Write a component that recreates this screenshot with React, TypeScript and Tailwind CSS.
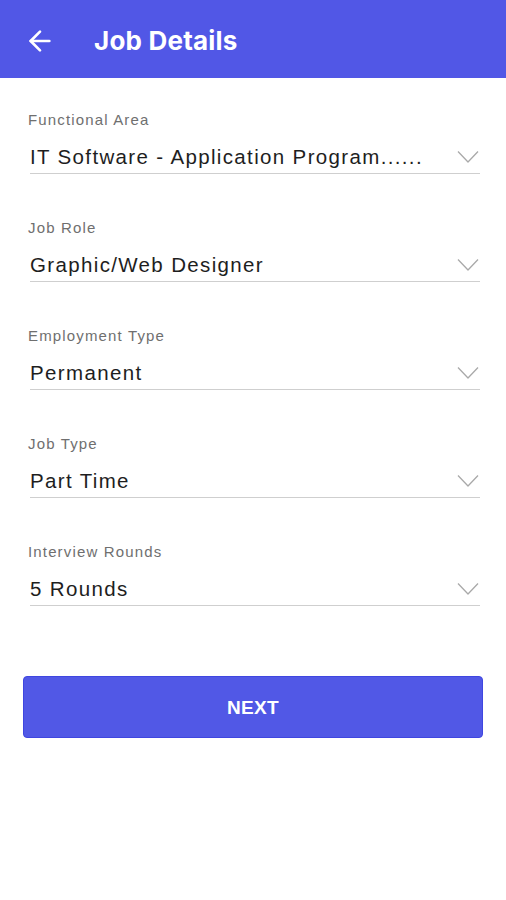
import { ArrowLeft } from "lucide-react";

const fields = [
  { label: "Functional Area", value: "IT Software - Application Program......" },
  { label: "Job Role", value: "Graphic/Web Designer" },
  { label: "Employment Type", value: "Permanent" },
  { label: "Job Type", value: "Part Time" },
  { label: "Interview Rounds", value: "5 Rounds" },
];

function Chevron() {
  return (
    <svg width="22" height="14" viewBox="0 0 22 14" fill="none" className="shrink-0 mr-[1px]">
      <polyline points="1,1.5 11,12 21,1.5" stroke="#a9a9a9" strokeWidth="1.3" strokeLinejoin="round" />
    </svg>
  );
}

function SelectField({ label, value }: { label: string; value: string }) {
  return (
    <div className="flex flex-col">
      <span className="text-[15px] leading-[20px] text-[#6f6f6f] tracking-[1.15px]">{label}</span>
      <div className="mt-[10px] ml-[2px] h-[34px] flex items-center justify-between border-b border-[#cfcfcf]">
        <span className="text-[20.5px] leading-[26px] text-[#1e1e1e] tracking-[1.35px]">{value}</span>
        <Chevron />
      </div>
    </div>
  );
}

export default function App() {
  return (
    <div className="w-[506px] h-[900px] bg-white font-['Liberation_Sans',Arial,sans-serif]">
      {/* Header */}
      <div className="h-[78px] bg-[#5157e6] flex items-center px-[24px] gap-[38px] pt-[3px]">
        <ArrowLeft className="h-8 w-8 text-white" strokeWidth={2} />
        <h1 className="text-white text-[26px] font-bold font-['Inter',sans-serif] tracking-[0.2px]">Job Details</h1>
      </div>

      {/* Form */}
      <div className="pt-[32px] pl-[28px] pr-[26px] flex flex-col gap-[44px]">
        {fields.map((f) => (
          <SelectField key={f.label} label={f.label} value={f.value} />
        ))}
      </div>

      <div className="px-[23px] pt-[70px]">
        <button className="w-full h-[62px] rounded-[4px] bg-[#5158e6] border border-[#3f46e0] text-white font-bold text-[19px] tracking-[0.3px] pt-[3px]">
          NEXT
        </button>
      </div>
    </div>
  );
}
